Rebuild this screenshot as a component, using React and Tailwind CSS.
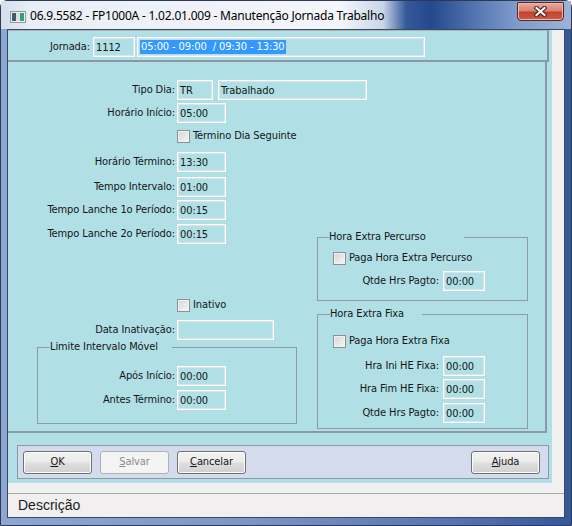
import React from "react";

const UI =
  "font-['DejaVu_Sans_Condensed','DejaVu_Sans',sans-serif] text-[11px] tracking-[-0.1px] text-[#151515]";

function Field({ w, children, className = "" }) {
  return (
    <div
      className={`${w} h-[20px] shrink-0 border border-white shadow-[inset_0_0_0_1px_#dbe5e8] flex items-center pl-[2px] leading-none whitespace-pre ${className}`}
    >
      {children}
    </div>
  );
}

function Row({ lw, gap, label, children, className = "" }) {
  return (
    <div className={`flex items-center h-[20px] ${gap} ${className}`}>
      <span className={`${lw} shrink-0 text-right whitespace-nowrap`}>{label}</span>
      {children}
    </div>
  );
}

function Check({ label, className = "" }) {
  return (
    <div className={`flex items-center h-[14px] ${className}`}>
      <span className="w-[13px] h-[13px] shrink-0 border border-[#8e8f8f] bg-[linear-gradient(135deg,#d4d4d4,#f8f8f8)] shadow-[inset_0_0_0_1px_#f2f2f2]" />
      <span className="ml-[3px] whitespace-nowrap">{label}</span>
    </div>
  );
}

function Group({ title, legend, className = "", children }) {
  return (
    <fieldset className={`border border-[#8e9ba6] ${className}`}>
      <legend className={`leading-[14px] whitespace-nowrap ${legend}`}>{title}</legend>
      {children}
    </fieldset>
  );
}

function Button({ children, disabled }) {
  return (
    <div
      className={
        disabled
          ? "w-[69px] h-[23px] rounded-[3px] border border-[#adb2b5] bg-[#f4f4f4] text-[#8a8a8a] flex items-center justify-center"
          : "w-[69px] h-[23px] rounded-[3px] border border-[#707070] bg-[linear-gradient(#f3f3f3,#ebebeb_45%,#dddddd_55%,#d0d0d0)] shadow-[inset_0_0_0_1px_#fbfbfb] flex items-center justify-center"
      }
    >
      {children}
    </div>
  );
}

function TitleBar() {
  return (
    <div className="relative h-[28px] shrink-0 flex items-center bg-[linear-gradient(90deg,#d3deec_0px,#e9eef6_30px,#f3f6fa_340px,#c9d5e8_382px,#36599b_405px,#24488c_430px,#4f71ad_470px,#7f9bcb_515px,#9db3da_570px)]">
      <svg width="16" height="12" viewBox="0 0 16 12" className="ml-[9px] mt-[3px] shrink-0">
        <rect x="0.5" y="0.5" width="15" height="11" fill="#eef1f3" stroke="#8f99a2" />
        <rect x="2" y="2" width="4" height="8" fill="#3d5f66" />
        <rect x="6" y="2" width="4" height="8" fill="#d9e2e6" />
        <rect x="10" y="2" width="4" height="8" fill="#3f9a7a" />
      </svg>
      <span className="ml-[4px] mt-[2px] font-['Noto_Sans',sans-serif] text-[12px] tracking-[-0.22px] text-black whitespace-nowrap">
        06.9.5582 - FP1000A - 1.02.01.009 - Manutenção Jornada Trabalho
      </span>
      <div className="absolute right-[7px] top-[1px] w-[47px] h-[19px] rounded-b-[4px] rounded-t-[1px] border border-[#5b2620] bg-[linear-gradient(#e9a99b,#d88473_45%,#c2412e_55%,#cc5b48)] shadow-[inset_0_0_0_1px_#f0b8ad] flex items-center justify-center">
        <svg width="13" height="11" viewBox="0 0 13 11">
          <path d="M2.5 2 L10.5 9 M10.5 2 L2.5 9" stroke="#4a1812" strokeWidth="4.2" strokeLinecap="square" />
          <path d="M2.5 2 L10.5 9 M10.5 2 L2.5 9" stroke="#ffffff" strokeWidth="2.2" strokeLinecap="square" />
        </svg>
      </div>
    </div>
  );
}

export default function App() {
  return (
    <div className={`w-[572px] h-[526px] overflow-hidden bg-white ${UI}`}>
      <div className="w-[572px] h-[526px] flex flex-col rounded-t-[7px] border border-[#2c3a55] bg-[linear-gradient(90deg,#8ea6d2,#7f98c8_40%,#5574b0_80%,#34579a)]">
        <TitleBar />
        <div className="flex-1 mx-[6px] mb-[7px] border border-[#3a475e] bg-[#f0f0f0] flex flex-col">
          <div className="h-[453px] flex shrink-0">
            <div className="w-[544px] bg-[#b0e0e6] flex flex-col">
              {/* Jornada header strip */}
              <div className="w-[541px] h-[32px] shrink-0 border-[#8b99a5] border-t border-t-[#aab5bd] border-b-2 border-r-2 pt-[6px]">
                <Row lw="w-[82px]" gap="gap-[3px]" label="Jornada:">
                  <Field w="w-[42px]">1112</Field>
                  <Field w="w-[288px]" className="ml-[-1px]">
                    <span className="bg-[#3399ff] text-white leading-[14px] px-[1px]">05:00 - 09:00  / 09:30 - 13:30</span>
                  </Field>
                </Row>
              </div>

              {/* Main form */}
              <div className="w-[539px] h-[371px] shrink-0 border-[#8b99a5] border-r-2 border-b-2 flex">
                <div className="w-[309px] shrink-0 flex flex-col">
                  <Row lw="w-[167px]" gap="gap-[2px]" label="Tipo Dia:" className="mt-[18px]">
                    <Field w="w-[36px]">TR</Field>
                    <Field w="w-[149px]" className="ml-[3px]">Trabalhado</Field>
                  </Row>
                  <Row lw="w-[167px]" gap="gap-[2px]" label="Horário Início:" className="mt-[3px]">
                    <Field w="w-[49px]">05:00</Field>
                  </Row>
                  <Check label="Término Dia Seguinte" className="mt-[6px] ml-[169px]" />
                  <Row lw="w-[167px]" gap="gap-[2px]" label="Horário Término:" className="mt-[9px]">
                    <Field w="w-[49px]">13:30</Field>
                  </Row>
                  <Row lw="w-[167px]" gap="gap-[2px]" label="Tempo Intervalo:" className="mt-[5px]">
                    <Field w="w-[49px]">01:00</Field>
                  </Row>
                  <Row lw="w-[167px]" gap="gap-[2px]" label="Tempo Lanche 1o Período:" className="mt-[3px]">
                    <Field w="w-[49px]">00:15</Field>
                  </Row>
                  <Row lw="w-[167px]" gap="gap-[2px]" label="Tempo Lanche 2o Período:" className="mt-[4px]">
                    <Field w="w-[49px]">00:15</Field>
                  </Row>
                  <Check label="Inativo" className="mt-[54px] ml-[169px]" />
                  <Row lw="w-[167px]" gap="gap-[2px]" label="Data Inativação:" className="mt-[8px]">
                    <Field w="w-[97px]" />
                  </Row>
                  <Group
                    title="Limite Intervalo Móvel"
                    legend="ml-[12px] pr-[14px]"
                    className="ml-[29px] w-[260px] h-[84px] flex flex-col"
                  >
                    <Row lw="w-[137px]" gap="gap-[2px]" label="Após Início:" className="mt-[12px]">
                      <Field w="w-[49px]">00:00</Field>
                    </Row>
                    <Row lw="w-[137px]" gap="gap-[2px]" label="Antes Término:" className="mt-[4px]">
                      <Field w="w-[49px]">00:00</Field>
                    </Row>
                  </Group>
                </div>

                <div className="w-[211px] shrink-0 flex flex-col">
                  <Group
                    title="Hora Extra Percurso"
                    legend="ml-[11px] pr-[38px]"
                    className="mt-[168px] h-[71px] flex flex-col"
                  >
                    <Check label="Paga Hora Extra Percurso" className="mt-[7px] ml-[15px]" />
                    <Row lw="w-[121px]" gap="gap-[4px]" label="Qtde Hrs Pagto:" className="mt-[6px]">
                      <Field w="w-[42px]">00:00</Field>
                    </Row>
                  </Group>
                  <Group
                    title="Hora Extra Fixa"
                    legend="ml-[12px] pr-[18px]"
                    className="mt-[6px] h-[122px] flex flex-col"
                  >
                    <Check label="Paga Hora Extra Fixa" className="mt-[13px] ml-[15px]" />
                    <Row lw="w-[121px]" gap="gap-[4px]" label="Hra Ini HE Fixa:" className="mt-[8px]">
                      <Field w="w-[42px]">00:00</Field>
                    </Row>
                    <Row lw="w-[121px]" gap="gap-[4px]" label="Hra Fim HE Fixa:" className="mt-[3px]">
                      <Field w="w-[42px]">00:00</Field>
                    </Row>
                    <Row lw="w-[121px]" gap="gap-[4px]" label="Qtde Hrs Pagto:" className="mt-[4px]">
                      <Field w="w-[42px]">00:00</Field>
                    </Row>
                  </Group>
                </div>
              </div>

              {/* Action buttons */}
              <div className="pt-[12px] pl-[9px]">
                <div className="w-[532px] h-[34px] border border-[#8b99a5] bg-[#d3dbec] flex items-center gap-[8px] pl-[5px] pr-[8px]">
                  <Button>
                    <span><u>O</u>K</span>
                  </Button>
                  <Button disabled>
                    <span><u>S</u>alvar</span>
                  </Button>
                  <Button>
                    <span><u>C</u>ancelar</span>
                  </Button>
                  <div className="ml-auto">
                    <Button>
                      <span><u>A</u>juda</span>
                    </Button>
                  </div>
                </div>
              </div>
            </div>
          </div>

          {/* Status bar */}
          <div className="mt-[10px] flex-1 border-t border-[#a9a9a9] bg-[#f1efef] flex items-center pl-[10px] font-['Liberation_Sans',sans-serif] text-[14px] tracking-normal text-[#1a1a1a]">
            Descrição
          </div>
        </div>
      </div>
    </div>
  );
}
